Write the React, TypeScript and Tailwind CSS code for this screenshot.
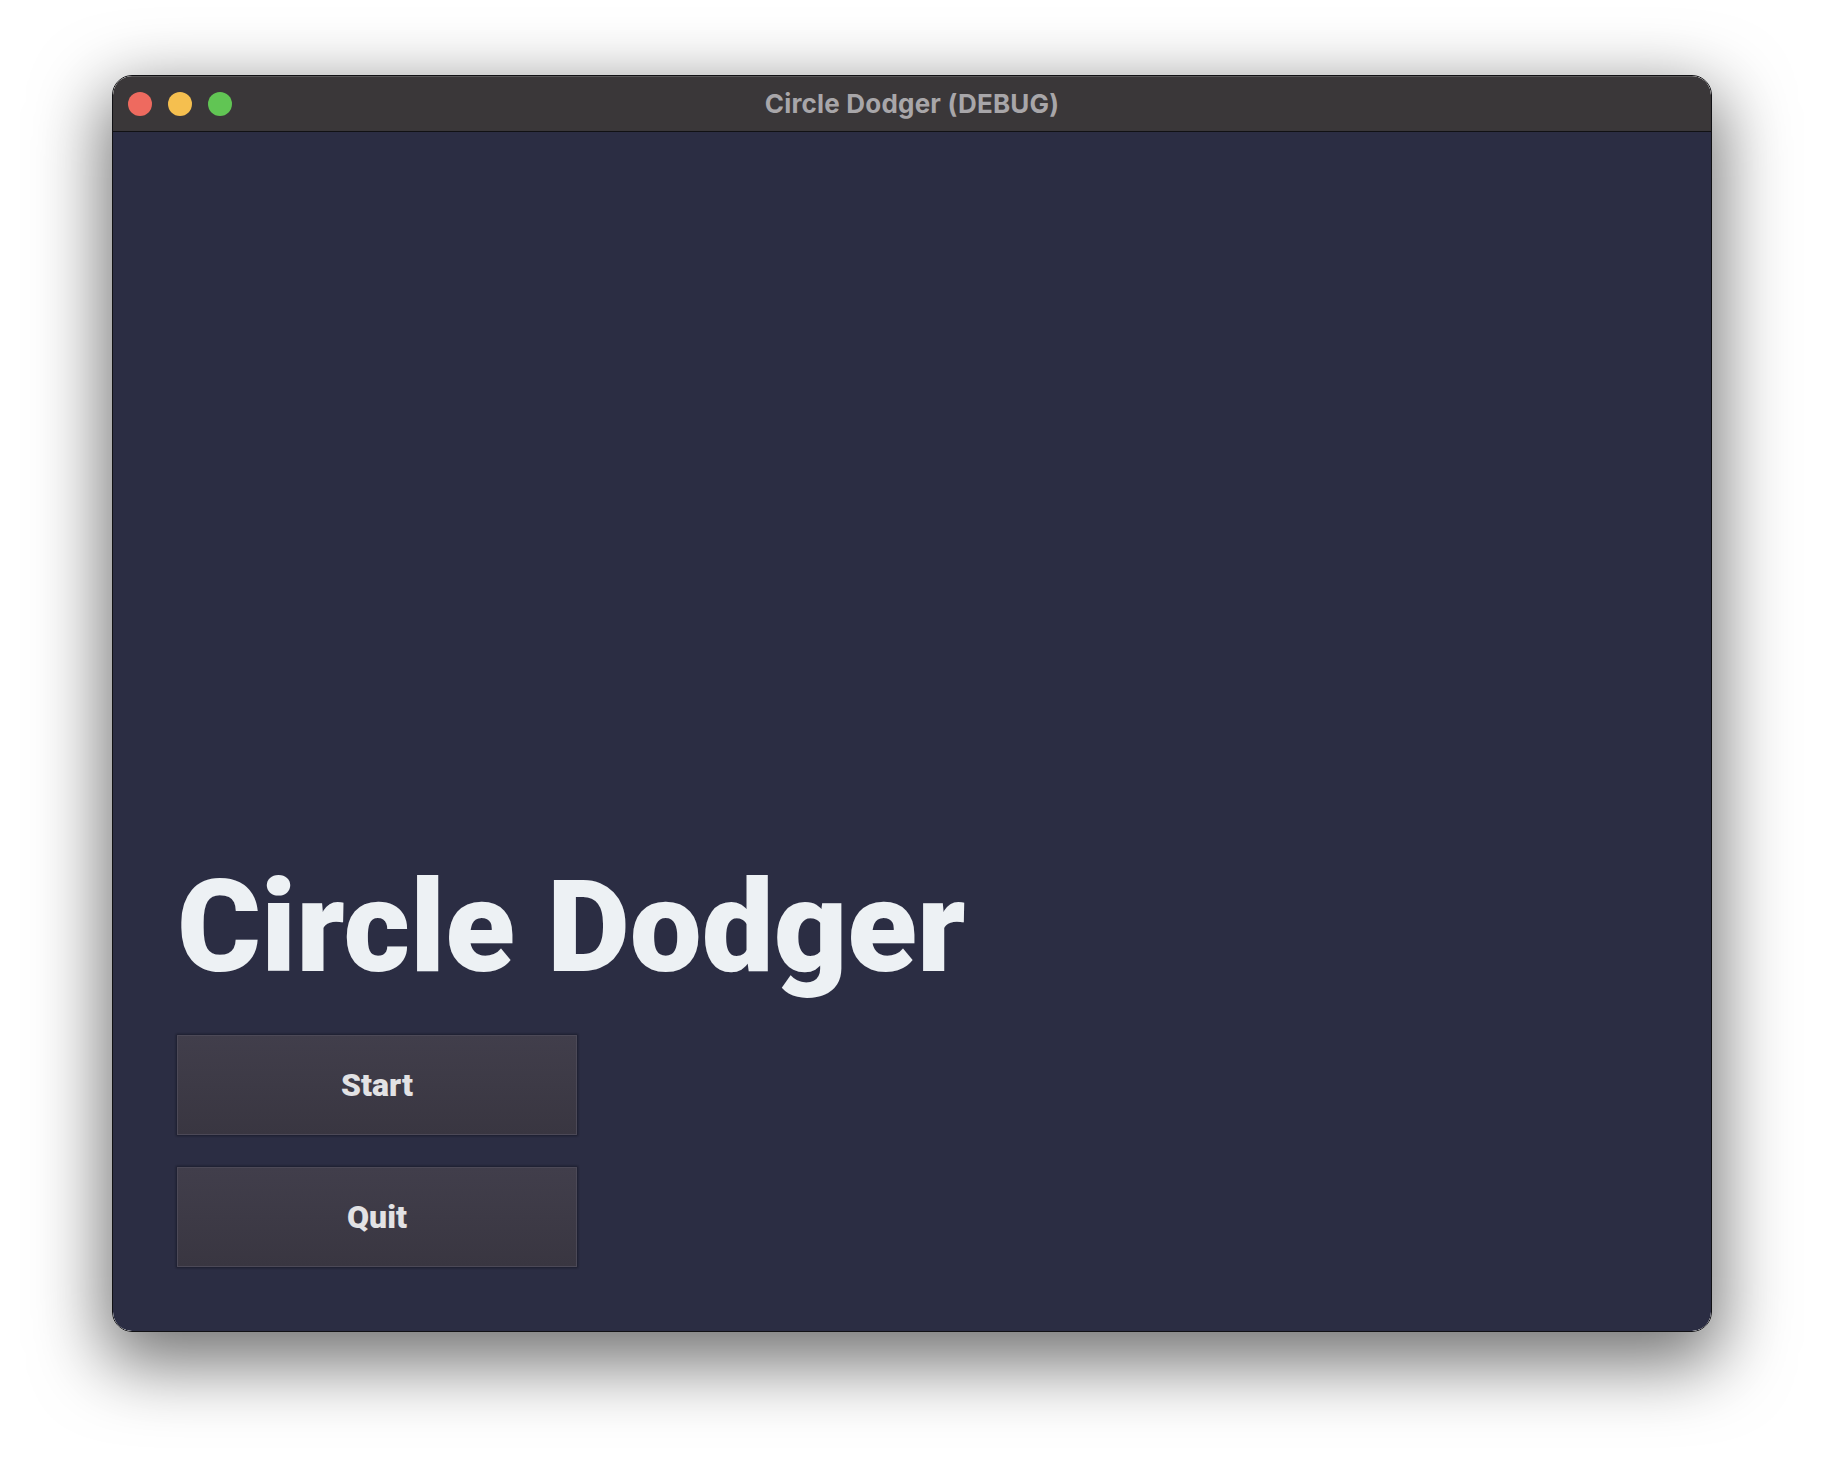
import React from "react";

export default function App() {
  return (
    <div className="w-[1824px] h-[1480px] bg-white overflow-hidden pl-[112px] pt-[75px]">
      <div className="w-[1600px] rounded-[20px] border border-[#111114] shadow-[0_24px_70px_8px_rgba(0,0,0,0.55)] overflow-hidden">
        <div className="rounded-[19px] overflow-hidden shadow-[inset_0_0_0_1px_rgba(255,255,255,0.14)]">
          {/* title bar */}
          <div className="relative h-[56px] bg-[#3a3739] border-b border-[#111114] flex items-center shadow-[inset_0_1px_0_rgba(255,255,255,0.16)]">
            <div className="flex items-center gap-4 pl-[15px]">
              <div className="w-6 h-6 rounded-full bg-[#ee6a5f]" />
              <div className="w-6 h-6 rounded-full bg-[#f5bf4f]" />
              <div className="w-6 h-6 rounded-full bg-[#61c554]" />
            </div>
            <div className="absolute inset-0 flex items-center justify-center pointer-events-none">
              <span className="text-[26px] font-bold text-[#a8a6a9] font-['Inter',sans-serif] tracking-[0.2px]">
                Circle Dodger (DEBUG)
              </span>
            </div>
          </div>
          {/* content */}
          <div className="h-[1199px] bg-[#2b2d43] flex flex-col justify-end px-16 pb-16 font-['Roboto',sans-serif]">
            <h1 className="text-[128px] leading-none font-black text-[#edf1f4] mb-[44px]">
              Circle Dodger
            </h1>
            <div className="flex flex-col gap-8">
              <button className="w-[400px] h-[100px] bg-gradient-to-b from-[#413e4b] to-[#393641] border border-[#4c4957] shadow-[0_0_2px_1px_rgba(10,10,20,0.45)] text-[32px] font-black text-[#e2e2e4] flex items-center justify-center">
                Start
              </button>
              <button className="w-[400px] h-[100px] bg-gradient-to-b from-[#413e4b] to-[#393641] border border-[#4c4957] shadow-[0_0_2px_1px_rgba(10,10,20,0.45)] text-[32px] font-black text-[#e2e2e4] flex items-center justify-center">
                Quit
              </button>
            </div>
          </div>
        </div>
      </div>
    </div>
  );
}
